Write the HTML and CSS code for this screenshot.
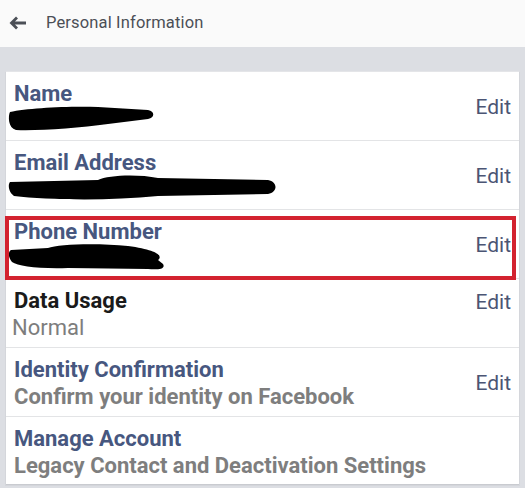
FILE: index.html
```html
<!DOCTYPE html>
<html>
<head>
<meta charset="utf-8">
<link rel="stylesheet" href="styles.css">
</head>
<body>
<header class="topbar">
  <svg class="back" width="18" height="14" viewBox="0 0 18 14"><path d="M17 7H3M8 1.5L2.5 7 8 12.5" fill="none" stroke="#4b4f56" stroke-width="2.8" stroke-linejoin="miter"/></svg>
  <span class="title">Personal Information</span>
</header>
<main class="card">
  <div class="row">
    <div class="info">
      <div class="label">Name</div>
      <svg class="redact" width="150" height="26" viewBox="0 0 150 26"><path d="M2 6 C20 2,60 0,90 1 L140 4 C147 5,147 12,140 13 L100 18 C70 22,30 25,8 24 C0 22,0 10,2 6 Z" fill="#000"/></svg>
    </div>
    <span class="edit">Edit</span>
  </div>
  <div class="row">
    <div class="info">
      <div class="label">Email Address</div>
      <svg class="redact" width="272" height="26" viewBox="0 0 272 26"><path d="M2 7 L90 5 C100 0,130 -1,150 3 L260 5 C270 7,270 17,260 19 L150 21 C100 26,40 25,6 21 C0 17,0 9,2 7 Z" fill="#000"/></svg>
    </div>
    <span class="edit">Edit</span>
  </div>
  <div class="row row-marked">
    <div class="info">
      <div class="label">Phone Number</div>
      <svg class="redact" width="160" height="26" viewBox="0 0 160 26"><path d="M3 6 L40 4 C50 0,90 -1,120 2 C150 6,155 12,150 16 L155 20 C158 25,150 26,140 25 L60 24 C30 25,10 22,4 18 C0 13,0 8,3 6 Z" fill="#000"/></svg>
    </div>
    <span class="edit">Edit</span>
  </div>
  <div class="row">
    <div class="info">
      <div class="label label-dark">Data Usage</div>
      <div class="sub sub-plain">Normal</div>
    </div>
    <span class="edit edit-top">Edit</span>
  </div>
  <div class="row">
    <div class="info">
      <div class="label">Identity Confirmation</div>
      <div class="sub sub-bold">Confirm your identity on Facebook</div>
    </div>
    <span class="edit">Edit</span>
  </div>
  <div class="row">
    <div class="info">
      <div class="label">Manage Account</div>
      <div class="sub sub-bold">Legacy Contact and Deactivation Settings</div>
    </div>
  </div>
</main>
</body>
</html>
```
FILE: styles.css
```css
* { box-sizing: border-box; }
html, body { margin: 0; padding: 0; }
body {
  background: #dcdee3;
  font-family: Roboto, "Liberation Sans", Arial, sans-serif;
  width: 525px;
  height: 488px;
  overflow: hidden;
}
.topbar {
  height: 47px;
  background: #fafafa;
  display: flex;
  align-items: center;
  padding-left: 9px;
  padding-bottom: 2px;
}
.back { display: block; margin-right: 19px; }
.title {
  font-size: 16.5px;
  color: #4b4f56;
  letter-spacing: 0.15px;
}
.card {
  margin: 24px 5px 0;
  background: #fff;
  border: 1px solid #d4d6db;
  border-top-color: #e4e5e8;
}
.row {
  display: flex;
  align-items: center;
  justify-content: space-between;
  padding: 9px 8px 7px 8px;
  height: 69px;
  border-bottom: 1px solid #e3e4e6;
}
.row:last-child { border-bottom: 1px solid #c9cbd0; height: 68px; }
.info { padding-left: 0; align-self: flex-start; }
.label {
  font-size: 22px;
  line-height: 25px;
  font-weight: 700;
  color: #47577f;
}
.label-dark { color: #1a1a1a; }
.sub {
  font-size: 22px;
  line-height: 26px;
  padding-top: 2px;
  color: #7d7d7d;
}
.sub-plain { margin-left: -2px; }
.sub-bold { font-weight: 700; color: #7e7e7e; }
.redact { display: block; margin-left: -6px; overflow: visible; }
.edit {
  font-size: 21px;
  color: #4b5574;
}
.edit-top { align-self: flex-start; padding-top: 2px; }
.row-marked { position: relative; }
.row-marked::after {
  content: "";
  position: absolute;
  left: -1px;
  right: 3px;
  top: 6px;
  bottom: -2px;
  border: 4.5px solid #d3222f;
  pointer-events: none;
}
```
